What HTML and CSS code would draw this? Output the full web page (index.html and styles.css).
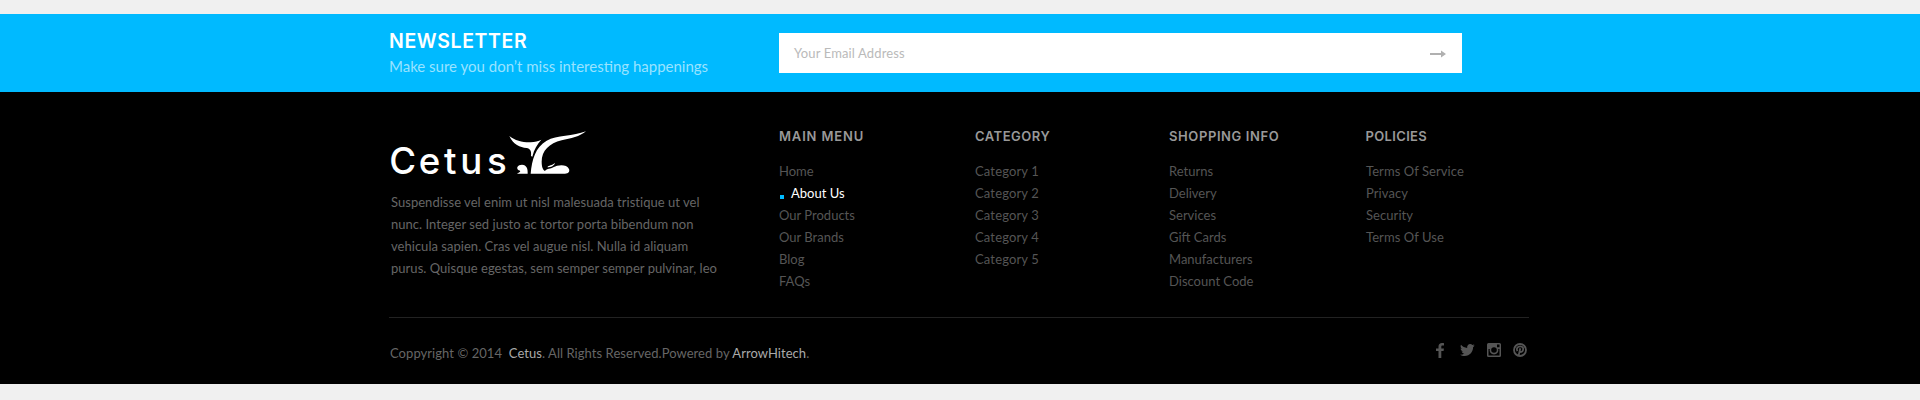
FILE: index.html
```html
<!DOCTYPE html>
<html lang="en">
<head>
<meta charset="utf-8">
<title>Cetus</title>
<link rel="stylesheet" href="styles.css">
</head>
<body>
<section class="newsletter">
  <div class="container newsletter-row">
    <div class="newsletter-copy">
      <h2 class="newsletter-title">NEWSLETTER</h2>
      <p class="newsletter-text">Make sure you don’t miss interesting happenings</p>
    </div>
    <div class="field">
      <span class="placeholder">Your Email Address</span>
      <svg class="arrow" width="16" height="8" viewBox="0 0 16 8"><path d="M0 3h11V0.6L16 4l-5 3.4V5H0z"/></svg>
    </div>
  </div>
</section>
<footer class="footer">
  <div class="container">
    <div class="columns">
      <div class="about">
        <svg class="logo" width="200" height="50" viewBox="30 24 600 150">
          <text class="logo-text" y="162" x="28 116 192 241 321">Cetus</text>
          <path d="M388 48C405 62 430 68 452 67C465 66 475 63 484 59C472 72 462 88 457 110L453 108C455 92 450 86 440 84C420 82 400 74 388 48Z"/>
          <path d="M452 161C456 118 466 82 500 62C530 46 580 49 618 34C600 50 572 55 545 61C508 70 485 92 485 125C485 140 488 148 495 153C501 145 512 147 520 142C534 134 560 132 567 147C570 155 565 161 555 161Z"/>
          <path d="M411 161C421 157 424 153 416 151C407 144 413 134 426 134C440 135 444 146 443 161Z"/>
          <path d="M502 142C506 135 516 137 525 129C523 137 513 142 502 142Z"/>
        </svg>
        <p class="about-text">Suspendisse vel enim ut nisl malesuada tristique ut vel<br>nunc. Integer sed justo ac tortor porta bibendum non<br>vehicula sapien. Cras vel augue nisl. Nulla id aliquam<br>purus. Quisque egestas, sem semper semper pulvinar, leo</p>
      </div>
      <nav class="menu">
        <h3 class="menu-title main">MAIN MENU</h3>
        <ul class="links"><li>Home</li><li class="active">About Us</li><li>Our Products</li><li>Our Brands</li><li>Blog</li><li>FAQs</li></ul>
      </nav>
      <nav class="menu">
        <h3 class="menu-title category">CATEGORY</h3>
        <ul class="links spaced"><li>Category 1</li><li>Category 2</li><li>Category 3</li><li>Category 4</li><li>Category 5</li></ul>
      </nav>
      <nav class="menu">
        <h3 class="menu-title shopping">SHOPPING INFO</h3>
        <ul class="links"><li>Returns</li><li>Delivery</li><li>Services</li><li>Gift Cards</li><li>Manufacturers</li><li>Discount Code</li></ul>
      </nav>
      <nav class="menu">
        <h3 class="menu-title policies">POLICIES</h3>
        <ul class="links indented"><li>Terms Of Service</li><li>Privacy</li><li>Security</li><li>Terms Of Use</li></ul>
      </nav>
    </div>
    <div class="bottom">
      <p class="copyright">Coppyright © 2014&nbsp; <span class="brand">Cetus</span>. All Rights Reserved.Powered by <span class="brand">ArrowHitech</span>.</p>
      <div class="social">
        <svg class="facebook" width="8" height="15" viewBox="0 0 8 15"><path d="M8 0.2V2.6H6.6C5.5 2.6 5.3 3.1 5.3 3.9V5.4H7.9L7.6 8H5.3V15H2.5V8H0V5.4H2.5V3.5C2.5 1.2 3.9 0 6 0C7 0 7.700 0.1 8 0.2Z"/></svg>
        <svg class="twitter" width="15" height="12" viewBox="0 0 15 12"><path d="M14.6 1.4C14.2 2 13.7 2.6 13.1 3C13.2 7.5 10 12 4.6 12C2.9 12 1.3 11.5 0 10.7C1.6 10.8 3.2 10.4 4.4 9.5C3.1 9.4 2 8.6 1.6 7.4C2.1 7.5 2.5 7.5 3 7.3C1.6 7 0.6 5.8 0.6 4.4C1 4.6 1.5 4.7 1.9 4.8C0.6 3.9 0.2 2.2 1 0.8C2.5 2.6 4.7 3.8 7.2 3.9C6.7 1.8 8.3 0 10.2 0C11 0 11.8 0.3 12.4 0.9C13 0.8 13.7 0.5 14.3 0.2C14.1 0.9 13.6 1.4 13 1.8C13.5 1.7 14.1 1.6 14.6 1.4Z"/></svg>
        <svg class="instagram" width="14" height="14" viewBox="0 0 14 14"><path fill-rule="evenodd" d="M1.5 0H12.5A1.5 1.5 0 0 1 14 1.5V12.5A1.5 1.5 0 0 1 12.5 14H1.5A1.5 1.5 0 0 1 0 12.5V1.5A1.5 1.5 0 0 1 1.5 0ZM10 1.6V4.2H12.5V1.6ZM1.5 5.9V12.4H12.5V5.9H11.2A4.400 4.400 0 1 1 2.8 5.9ZM7 4.2A2.8 2.8 0 1 0 7 9.8A2.8 2.8 0 1 0 7 4.2Z"/></svg>
        <svg class="pinterest" width="14" height="14" viewBox="0 0 14 14"><circle class="ring" cx="7" cy="7" r="6"/><path class="stroke" d="M4.3 8.1C2.9 5.5 4.7 3.4 7.3 3.4C9.8 3.4 10.7 5.2 10 7.2C9.4 9.3 7.2 9.5 6.7 8.2M7.3 5.2L5.6 12.6"/></svg>
      </div>
    </div>
  </div>
</footer>
</body>
</html>
```
FILE: styles.css
```css
* { box-sizing: border-box; }
body { margin: 0; padding-top: 14px; background: #f0f0f0; font-family: Lato, "Liberation Sans", sans-serif; font-size: 13px; }
h2, h3, p, ul { margin: 0; padding: 0; }
svg { display: block; fill: #fff; }
.container { width: 1140px; margin-left: 389px; }
.newsletter { height: 78px; background: #00baff; }
.newsletter-row { display: flex; }
.newsletter-copy { width: 390px; padding-top: 15px; white-space: nowrap; }
.newsletter-title { font: 600 19.5px/24px Inter, sans-serif; letter-spacing: 0.6px; color: #fff; }
.newsletter-text { padding-top: 2px; font-size: 15px; line-height: 22px; color: #99e3ff; }
.field { display: flex; align-items: center; justify-content: space-between; width: 683px; height: 40px; margin-top: 19px; padding: 2px 16px 0 15px; background: #fff; }
.placeholder { color: #bababa; line-height: 18px; padding-bottom: 2px; letter-spacing: 0.13px; }
.arrow { fill: #b0b0b0; }
.footer { height: 292px; padding-top: 36px; background: #000; }
.columns { display: grid; grid-template-columns: 390px 196px 194px 196.5px 163.5px; height: 190px; border-bottom: 1px solid #222; }
.about { padding-left: 1px; }
.logo { overflow: visible; }
.logo-text { font: 500 110px Inter, sans-serif; }
.about-text { margin: 13px 0 0 1px; line-height: 22px; letter-spacing: 0.03px; color: #666; white-space: nowrap; }
.menu-title { font: 600 13px/16px Inter, sans-serif; color: #999; white-space: nowrap; }
.main { letter-spacing: 0.85px; }
.category { letter-spacing: 0.5px; }
.shopping { letter-spacing: 0.6px; }
.policies { letter-spacing: 0.35px; }
.links { padding-top: 16px; list-style: none; line-height: 22px; color: #555; }
.spaced { letter-spacing: 0.15px; }
.indented { padding-left: 0.5px; letter-spacing: 0.07px; }
.active { display: flex; align-items: center; gap: 7px; color: #fff; }
.active::before { content: ""; width: 4px; height: 4px; margin: 7px 0 0 1px; background: #00baff; }
.bottom { display: flex; justify-content: space-between; padding: 23px 2px 0 1px; }
.copyright { padding-top: 1px; line-height: 22px; letter-spacing: 0.055px; color: #666; }
.brand { color: #aaa; }
.social { display: flex; align-items: center; height: 18px; }
.social svg { fill: #555; }
.twitter { margin-left: 16px; }
.instagram { margin-left: 12px; }
.pinterest { margin-left: 12px; }
.social .ring, .social .stroke { fill: none; stroke: #555; stroke-width: 1.8; }
```
